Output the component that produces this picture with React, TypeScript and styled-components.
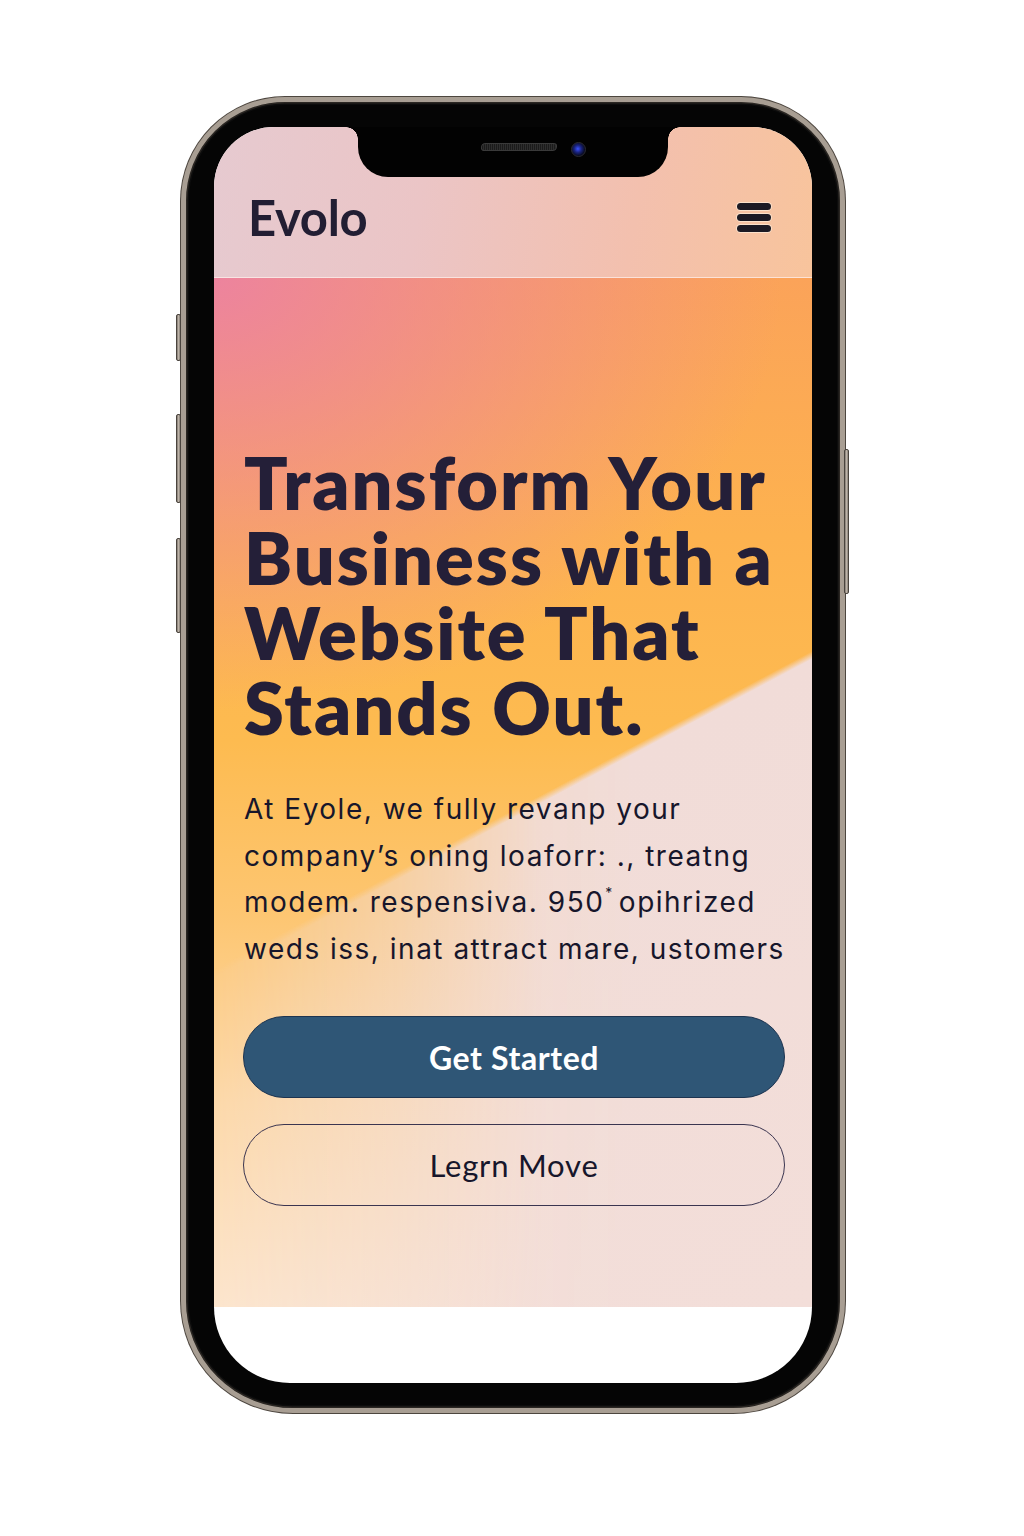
import React from "react";
import styled, { createGlobalStyle } from "styled-components";

const GlobalStyle = createGlobalStyle`
  html, body { margin: 0; padding: 0; background: #ffffff; }
  * { box-sizing: border-box; }
`;

const Stage = styled.div`
  width: 1024px;
  min-height: 1536px;
  padding: 97px 0 0 181px;
  background: #ffffff;
`;

const Phone = styled.div`
  position: relative;
  width: 664px;
  height: 1316px;
  padding: 25px 28px;
  border: 5px solid #a89e93;
  border-radius: 104px 104px 112px 112px;
  background: #050505;
  box-shadow: 0 0 0 1px #4d463f, inset 0 0 0 1.5px #2a2622, inset 0 0 0 3px #0c0c0c;
`;

const SideButton = styled.div<{ $side: "left" | "right"; $top: number; $h: number }>`
  position: absolute;
  ${(p) => (p.$side === "left" ? "left: -10px;" : "right: -9px;")}
  top: ${(p) => p.$top}px;
  width: 5px;
  height: ${(p) => p.$h}px;
  border-radius: 2px;
  background: linear-gradient(90deg, #7e766e, #bdb3a8 50%, #8a8279);
  border: 1px solid #4a443e;
`;

const Screen = styled.div`
  position: relative;
  width: 598px;
  height: 1256px;
  border-radius: 60px 60px 76px 76px;
  overflow: hidden;
  background: #ffffff;
  display: flex;
  flex-direction: column;
`;

const Notch = styled.div`
  position: absolute;
  top: 0;
  left: 144px;
  width: 310px;
  height: 50px;
  background: #020202;
  border-radius: 0 0 30px 30px;
  display: flex;
  align-items: center;
  justify-content: center;
  gap: 14px;
  padding: 0 0 6px 40px;
  z-index: 5;

  &::before,
  &::after {
    content: "";
    position: absolute;
    top: 0;
    width: 12px;
    height: 12px;
  }
  &::before {
    left: -12px;
    background: radial-gradient(circle at 0 100%, transparent 11.5px, #020202 12px);
  }
  &::after {
    right: -12px;
    background: radial-gradient(circle at 100% 100%, transparent 11.5px, #020202 12px);
  }
`;

const Speaker = styled.div`
  width: 76px;
  height: 8px;
  margin-top: -4px;
  border-radius: 4px;
  border: 1px solid #3a3a3a;
  background: repeating-linear-gradient(90deg, #1b1b1b 0 1px, #2e2e2e 1px 2px);
  transform: skewX(-8deg);
`;

const Camera = styled.div`
  width: 15px;
  height: 15px;
  border-radius: 50%;
  border: 1.5px solid #2c2c36;
  background: radial-gradient(circle at 45% 45%, #3b52ff 0%, #1a2480 35%, #080a1c 70%);
`;

const Header = styled.header`
  height: 151px;
  flex: none;
  display: flex;
  align-items: center;
  justify-content: space-between;
  padding: 30px 41px 0 34px;
  background: linear-gradient(100deg, #e6cad0 0%, #ebc5c6 35%, #f3c0ae 70%, #f8c49c 100%);
  border-bottom: 1.5px solid rgba(255, 240, 235, 0.7);
`;

const Logo = styled.div`
  font-family: Lato, "Liberation Sans", sans-serif;
  font-weight: 700;
  font-size: 49px;
  letter-spacing: -0.3px;
  color: #221e33;
`;

const Burger = styled.div`
  display: flex;
  flex-direction: column;
  gap: 4px;
  width: 34px;
`;

const BurgerBar = styled.span`
  display: block;
  height: 7px;
  border-radius: 4px;
  background: #1c1a24;
  box-shadow: 0 0 0 1px rgba(255, 245, 230, 0.6);
`;

const Hero = styled.section`
  position: relative;
  height: 1029px;
  flex: none;
  display: flex;
  flex-direction: column;
  padding: 167px 27px 0 30px;
  background:
    radial-gradient(ellipse 95% 42% at 0% 0%, rgba(235, 128, 165, 0.9), rgba(235, 128, 165, 0) 100%),
    linear-gradient(180deg, #fba359 0%, #fdb24f 25%, #fdbb50 45%, #fdc672 62%, #fdd9a8 80%, #fde6cd 100%);
  overflow: hidden;

  &::before {
    content: "";
    position: absolute;
    inset: 0;
    background: linear-gradient(152deg, transparent 51.3%, #f1dcd8 51.9%, #f3ded9 100%);
    -webkit-mask-image: linear-gradient(90deg, rgba(0,0,0,0.05) 0%, rgba(0,0,0,0.5) 30%, rgba(0,0,0,0.95) 55%, #000 70%);
    mask-image: linear-gradient(90deg, rgba(0,0,0,0.05) 0%, rgba(0,0,0,0.5) 30%, rgba(0,0,0,0.95) 55%, #000 70%);
    z-index: 0;
  }
  & > * {
    position: relative;
    z-index: 1;
  }
`;

const Headline = styled.h1`
  margin: 0;
  font-family: Lato, "Liberation Sans", sans-serif;
  font-weight: 800;
  font-size: 72px;
  line-height: 75px;
  letter-spacing: 2px;
  color: #241f38;
  white-space: nowrap;
`;

const Lead = styled.p`
  margin: 41px 0 0 0;
  font-family: Inter, "Noto Sans", sans-serif;
  font-weight: 400;
  font-size: 28px;
  line-height: 46.5px;
  letter-spacing: 1.5px;
  color: #17162b;
  white-space: nowrap;
`;

const Sup = styled.sup`
  font-size: 14px;
  vertical-align: 14px;
  line-height: 0;
  margin: 0 5px 0 1px;
`;

const Actions = styled.div`
  display: flex;
  flex-direction: column;
  gap: 26px;
  margin-top: 44px;
`;

const Button = styled.button<{ $variant: "primary" | "outline" }>`
  width: 542px;
  height: 82px;
  border-radius: 41px;
  margin-left: -1px;
  display: flex;
  align-items: center;
  justify-content: center;
  font-family: Lato, "Liberation Sans", sans-serif;
  cursor: pointer;
  ${(p) =>
    p.$variant === "primary"
      ? `
    background: #2f5676;
    border: 1.5px solid #1d3450;
    color: #ffffff;
    font-weight: 700;
    font-size: 32px;
    letter-spacing: 0.6px;
  `
      : `
    background: transparent;
    border: 1.5px solid #3b3550;
    color: #17162b;
    font-weight: 400;
    font-size: 31px;
    letter-spacing: 0.8px;
  `}
`;

export default function App() {
  return (
    <>
      <GlobalStyle />
      <Stage>
        <Phone>
          <SideButton $side="left" $top={212} $h={47} />
          <SideButton $side="left" $top={312} $h={89} />
          <SideButton $side="left" $top={436} $h={95} />
          <SideButton $side="right" $top={347} $h={145} />
          <Screen>
            <Notch>
              <Speaker />
              <Camera />
            </Notch>
            <Header>
              <Logo>Evolo</Logo>
              <Burger aria-label="Menu">
                <BurgerBar />
                <BurgerBar />
                <BurgerBar />
              </Burger>
            </Header>
            <Hero>
              <Headline>
                Transform Your
                <br />
                Business with a
                <br />
                Website That
                <br />
                Stands Out.
              </Headline>
              <Lead>
                At Eyole, we fully revanp your
                <br />
                company’s oning loaforr: ., treatng
                <br />
                modem. respensiva. 950<Sup>*</Sup>opihrized
                <br />
                weds iss, inat attract mare, ustomers
              </Lead>
              <Actions>
                <Button $variant="primary">Get Started</Button>
                <Button $variant="outline">Legrn Move</Button>
              </Actions>
            </Hero>
          </Screen>
        </Phone>
      </Stage>
    </>
  );
}
